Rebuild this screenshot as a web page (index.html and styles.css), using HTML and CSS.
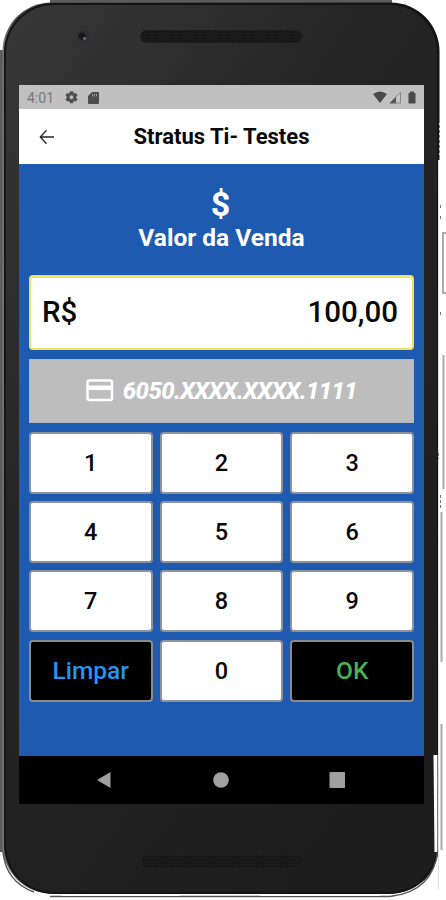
FILE: index.html
```html
<!DOCTYPE html>
<html lang="pt-BR">
<head>
<meta charset="utf-8">
<title>Valor da Venda</title>
<link rel="stylesheet" href="styles.css">
</head>
<body>
<div class="device">
  <svg class="shell" width="446" height="900" viewBox="0 0 446 900" aria-hidden="true">
    <defs>
      <linearGradient id="body" x1="0" y1="0" x2=".7" y2="1">
        <stop offset="0" stop-color="#383838"/><stop offset=".4" stop-color="#252525"/><stop offset="1" stop-color="#1d1d1e"/>
      </linearGradient>
      <linearGradient id="edge" x1="0" y1="0" x2="1" y2="0">
        <stop offset="0" stop-color="#777"/><stop offset=".03" stop-color="#444"/><stop offset="1" stop-color="#111"/>
      </linearGradient>
      <pattern id="mesh" width="3" height="3" patternUnits="userSpaceOnUse">
        <rect width="3" height="3" fill="#181818"/><rect width="1" height="1" fill="#262626"/>
      </pattern>
    </defs>
    <path d="M50 0H392V5H50ZM0 50H6V852H0Z" fill="#5c5c5c"/>
    <rect x="2.500" y="2.500" width="437" height="891" rx="49" fill="url(#edge)"/>
    <path d="M437 160V735L435 850V893H446V160Z" fill="#fff"/>
    <rect x="5" y="4" width="433" height="889" rx="49" fill="url(#body)" stroke="#141414" stroke-width="2"/>
    <path d="M433.500 755H438V852H434.500Z" fill="#fff"/>
    <path d="M3 852Q6 882 34 892M50 896.500H390Q433 892 438 850V755" fill="none" stroke="#555" stroke-width="1.500"/>
    <path d="M62 895H180M260 895H380" stroke="#fff" stroke-width="2"/>
    <path d="M439.500 123V155M438.500 160V890" stroke="#ddd" stroke-width="1"/>
    <path d="M439.500 125V155M440.500 205V208M440.500 216V221M440.500 312V315M438.500 453V459M440.500 495V508" stroke="#777" stroke-dasharray="3 2"/>
    <path d="M446 233H443V293H446M443.500 355V489M441.500 512V662M441.500 724V850" fill="none" stroke="#aaa" stroke-width="2"/>
    <circle cx="82.500" cy="36.500" r="6.500" fill="#303033"/><circle cx="82" cy="36" r="3.800" fill="#19191c"/><circle cx="84.500" cy="38.500" r="1.400" fill="#73737b"/>
    <rect x="140" y="30" width="162" height="13" rx="6.500" fill="url(#mesh)"/>
    <rect x="141" y="855" width="161" height="13" rx="6.500" fill="url(#mesh)"/>
  </svg>
  <main class="screen">
    <div class="status">
      <span class="clock">4:01</span>
      <svg class="gear" width="13" height="13" viewBox="0 0 24 24"><path fill="#4d4d4d" stroke="#4d4d4d" fill-rule="evenodd" d="M9.500 1h5l.6 3 2 1.100 3-1 2.400 4.200-2.300 2v2.400l2.300 2-2.400 4.200-3-1-2 1.100-.6 3h-5l-.6-3-2-1.100-3 1-2.400-4.200 2.300-2v-2.400l-2.300-2 2.400-4.200 3 1 2-1.100zM12 7.500a4 4 0 1 0 0 8A4 4 0 0 0 12 7.500z"/></svg>
      <svg class="sd" width="11" height="12" viewBox="0 0 11 12"><path fill="#4d4d4d" d="M4 0h6q1 0 1 1v10q0 1-1 1H1q-1 0-1-1V4z"/><path d="M4.500 2v2.500M6.500 2v2.500M8.500 2v2.500" stroke="#999"/></svg>
      <svg class="signals" width="44" height="13" viewBox="0 0 44 13"><path d="M0 3Q7 -2 14 3L7 12Z" fill="#4a4a4a"/><path d="M17 12L27.500 1.500V12Z" fill="#c4c4c4" stroke="#777" stroke-width=".8"/><path d="M16.500 12.300L23 5.800V12.300Z" fill="#555"/><path d="M35.500 2H37V.5H41V2H42.500V12.500H35.500Z" fill="#4a4a4a"/></svg>
    </div>
    <header class="bar">
      <svg class="back" width="16" height="16" viewBox="0 0 16 16"><path d="M7.500 1.300L1.300 8L7.500 14.700M1.500 8H15" fill="none" stroke="#222" stroke-width="1.300"/></svg>
      <h1>Stratus Ti- Testes</h1>
    </header>
    <section class="sale">
      <div class="dollar">$</div>
      <h2>Valor da Venda</h2>
      <div class="amount"><span>R$</span><span>100,00</span></div>
      <div class="card">
        <svg width="28" height="23" viewBox="0 0 28 23"><rect x="1.500" y="1.500" width="24.500" height="19.500" rx="2" fill="none" stroke="#fff" stroke-width="2.500"/><path d="M1.500 8.800H26" stroke="#fff" stroke-width="4.500"/></svg>
        <span>6050.XXXX.XXXX.1111</span>
      </div>
      <div class="keys">
        <button>1</button><button>2</button><button>3</button>
        <button>4</button><button>5</button><button>6</button>
        <button>7</button><button>8</button><button>9</button>
        <button class="clear">Limpar</button><button>0</button><button class="ok">OK</button>
      </div>
    </section>
    <nav class="nav">
      <svg width="405" height="47" viewBox="0 0 405 47"><path d="M78 24L91.500 16V32Z" fill="#a0a0a0"/><circle cx="202" cy="24" r="7.800" fill="#a0a0a0"/><rect x="310.500" y="16" width="15.500" height="16" rx="1" fill="#a0a0a0"/></svg>
    </nav>
  </main>
</div>
</body>
</html>
```
FILE: styles.css
```css
* { box-sizing: border-box; }
body { margin: 0; background: #fff; font-family: Roboto, sans-serif; }
.device { position: relative; width: 446px; height: 900px; padding: 85px 22px 0 19px; overflow: hidden; }
.shell { position: absolute; top: 0; left: 0; }
.screen { position: relative; width: 405px; height: 719px; display: flex; flex-direction: column; background: #1e5aaf; }
.status { height: 24px; background: #c0c0c0; display: flex; align-items: center; padding: 1px 7px 0 8px; }
.clock { width: 38px; font-size: 14px; color: #777; }
.sd { margin-left: 10px; }
.signals { margin-left: auto; }
.bar { height: 55px; background: #fff; display: grid; grid-template-columns: 50px 1fr 50px; align-items: center; }
.back { margin-left: 20px; }
h1 { margin: 0; text-align: center; font-size: 22px; line-height: 28px; font-weight: 700; color: #080808; white-space: nowrap; }
.sale { height: 592px; padding: 22px 10px 0; background: #1e5aaf; color: #fff; }
.dollar { height: 37px; padding-right: 2px; text-align: center; font-size: 34px; line-height: 37px; font-weight: 700; }
h2 { margin: 0; height: 30px; line-height: 30px; text-align: center; font-size: 24.5px; font-weight: 700; }
.amount { height: 75px; margin-top: 22px; padding: 0 14px 2px 11px; display: flex; justify-content: space-between; align-items: center; background: #fff; border: 2px solid #f1e15c; border-top-width: 3px; border-radius: 4px; color: #080808; font-size: 29.5px; font-weight: 500; }
.card { height: 64px; margin: 9px 0; padding-bottom: 1px; display: flex; align-items: center; justify-content: center; gap: 9px; background: #bdbdbd; border: 1px solid #aeb7c3; font-size: 24px; font-weight: 800; font-style: italic; letter-spacing: -.65px; }
.keys { display: grid; grid-template-columns: repeat(3, 1fr); grid-auto-rows: 62px; gap: 7.2px; }
button { padding: 0; border: 2px solid #8d939b; border-radius: 4px; background: #fff; color: #080808; font: 500 23.5px Roboto, sans-serif; }
.clear, .ok { background: #000; border-color: #8c8c8c; }
.clear { color: #2196f3; font-size: 24.5px; }
.ok { color: #4caf50; font-size: 24.5px; }
.nav { height: 48px; background: #000; }
.nav svg { display: block; }
```
